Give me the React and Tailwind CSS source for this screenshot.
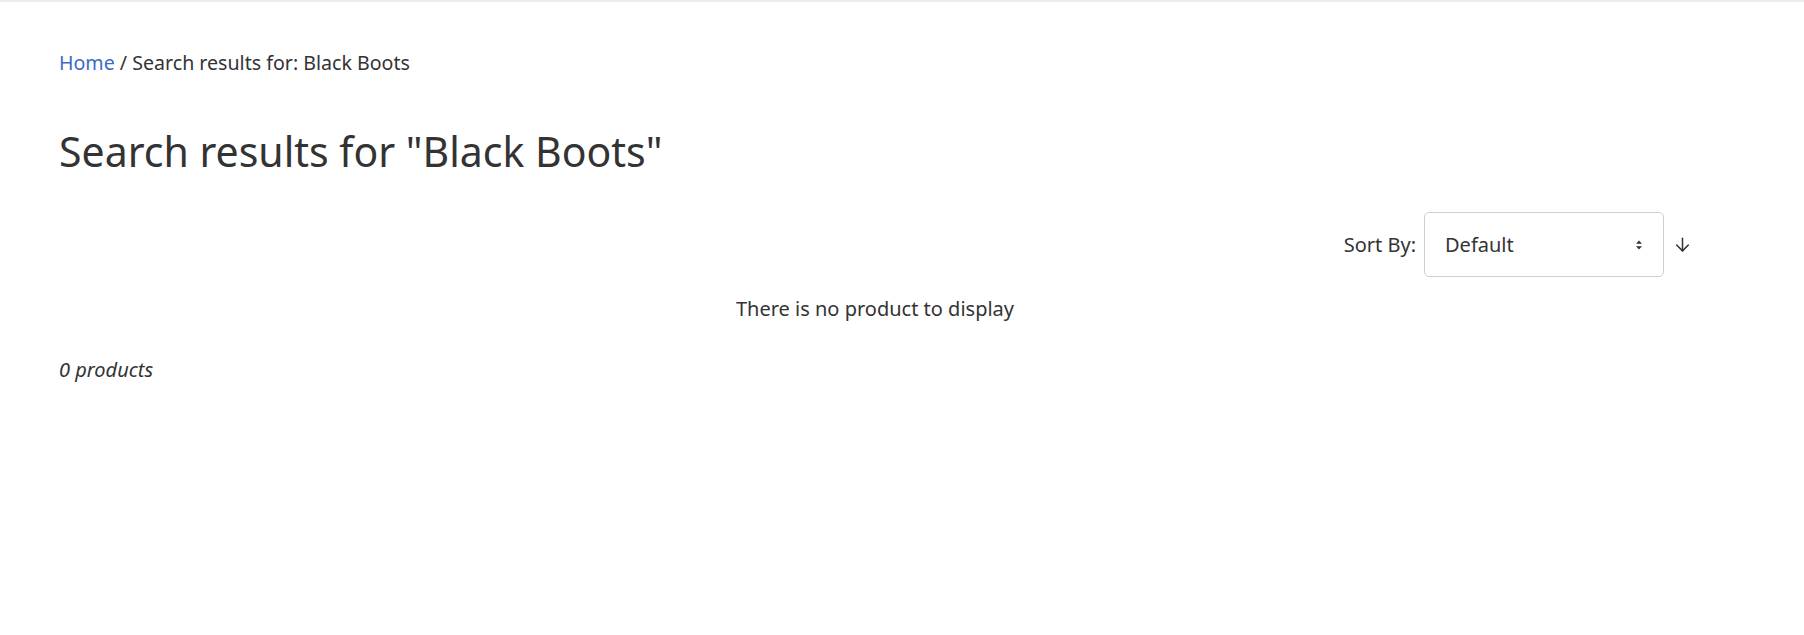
export default function App() {
  return (
    <div className="min-h-[635px] bg-white border-t-2 border-[#ececec] text-[#333333]" style={{ fontFamily: '"Noto Sans", "Open Sans", sans-serif' }}>
      <div className="pl-[59px] pr-[113px]">
        <div className="pt-[46px] text-[19.6px] leading-[30px]">
          <a href="#" className="text-[#3a6cc6]">Home</a>
          <span> / Search results for: Black Boots</span>
        </div>
        <h1 className="mt-[45px] text-[41px] leading-[56px] font-normal">Search results for "Black Boots"</h1>
        <div className="mt-[33px] flex items-center justify-end">
          <span className="text-[20px] mr-[8px]">Sort By:</span>
          <div className="w-[240px] h-[65px] border border-[#cfcfcf] rounded-[5px] flex items-center justify-between pl-[20px] pr-[20px]">
            <span className="text-[20px]">Default</span>
            <svg width="8" height="10" viewBox="0 0 8 10" className="text-[#333]">
              <path d="M4 0.5 L7 3.8 H1 Z" fill="currentColor" />
              <path d="M4 9.5 L7 6.2 H1 Z" fill="currentColor" />
            </svg>
          </div>
          <svg width="17" height="17" viewBox="0 0 16 16" className="ml-[10px] text-[#333]" fill="none" stroke="currentColor" strokeWidth="1.4" strokeLinecap="round" strokeLinejoin="round">
            <path d="M8 2 V14" />
            <path d="M2.5 8.5 L8 14 L13.5 8.5" />
          </svg>
        </div>
        <p className="mt-[17px] text-center text-[20px] leading-[30px]">There is no product to display</p>
        <p className="mt-[31px] text-[20px] leading-[30px] italic">0 products</p>
      </div>
    </div>
  );
}
